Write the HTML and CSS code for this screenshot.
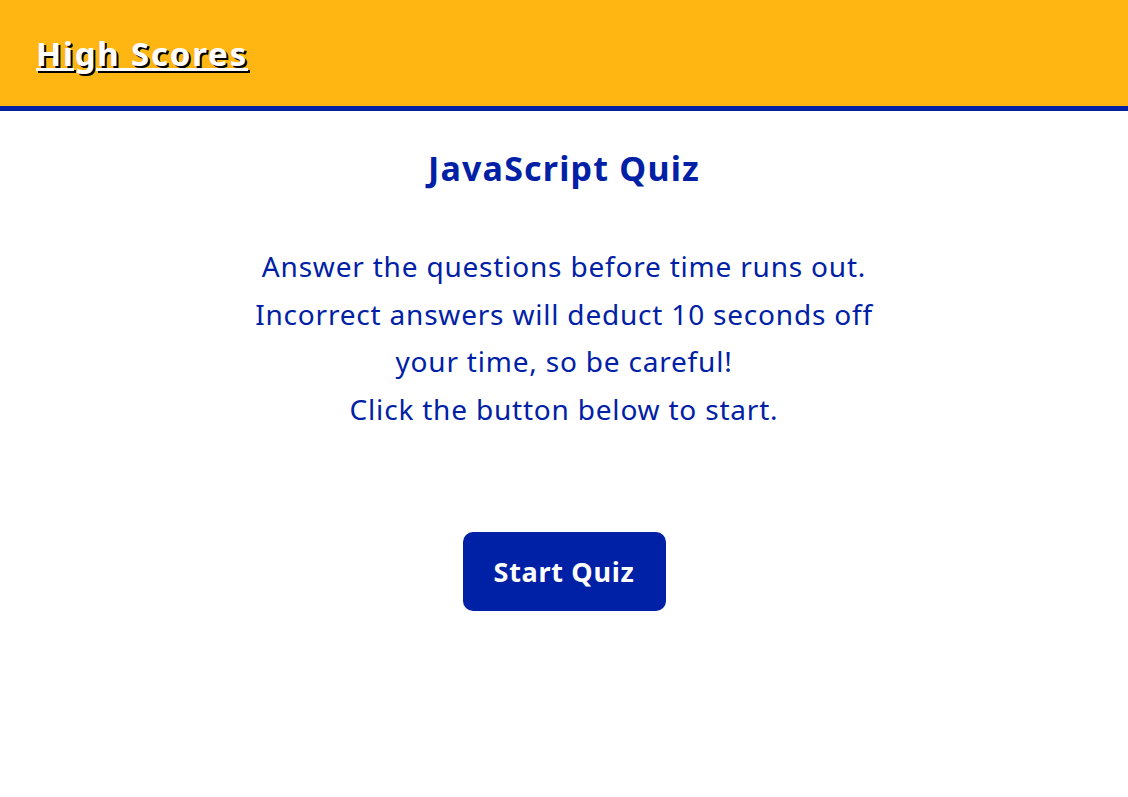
FILE: index.html
```html
<!DOCTYPE html>
<html lang="en">
<head>
<meta charset="utf-8">
<title>JavaScript Quiz</title>
<link rel="stylesheet" href="styles.css">
</head>
<body>
<header class="top-bar">
  <a class="scores-link" href="#">High Scores</a>
</header>
<main class="quiz">
  <h1 class="quiz-title">JavaScript Quiz</h1>
  <p class="quiz-intro">Answer the questions before time runs out.<br>Incorrect answers will deduct 10 seconds off<br>your time, so be careful!<br>Click the button below to start.</p>
  <button class="start-btn" type="button">Start Quiz</button>
</main>
</body>
</html>
```
FILE: styles.css
```css
* { box-sizing: border-box; }
html, body { margin: 0; padding: 0; background: #fff; }
body { font-family: "Noto Sans", "Open Sans", sans-serif; color: #0021a5; }
.top-bar {
  height: 111px;
  background: #ffb612;
  border-bottom: 5px solid #0021a5;
  display: flex;
  align-items: center;
  padding: 0 36px;
}
.scores-link {
  color: #fff;
  font-size: 33px;
  font-weight: 700;
  text-decoration: underline;
  text-shadow: 2px 2px 0 #000;
  letter-spacing: 1.8px;
}
.quiz {
  display: flex;
  flex-direction: column;
  align-items: center;
  text-align: center;
}
.quiz-title {
  margin: 36px 0 0;
  font-size: 34px;
  font-weight: 700;
  line-height: 42px;
  letter-spacing: 1.2px;
}
.quiz-intro {
  margin: 54px 0 0;
  font-size: 28px;
  line-height: 47.5px;
  letter-spacing: 0.8px;
}
.start-btn {
  margin-top: 99px;
  width: 203px;
  height: 79px;
  border: none;
  border-radius: 10px;
  background: #0021a5;
  color: #fff;
  font-family: inherit;
  font-size: 27px;
  font-weight: 700;
  letter-spacing: 0.7px;
}
```
